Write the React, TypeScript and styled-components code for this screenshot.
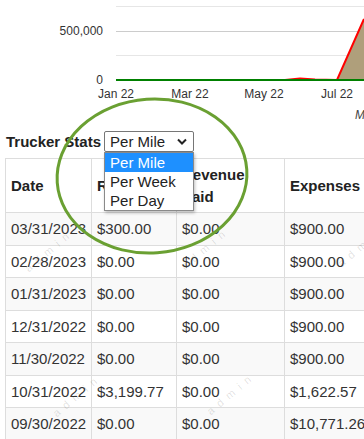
import React from "react"
import styled, { createGlobalStyle } from "styled-components"

const GlobalStyle = createGlobalStyle`
  html, body {
    margin: 0;
    padding: 0;
    background: #fff;
    overflow: hidden;
  }
  body {
    font-family: "Liberation Sans", Arial, sans-serif;
    font-size: 15px;
    color: #333;
  }
`

const Page = styled.div`
  position: relative;
  width: 364px;
  height: 439px;
  overflow: hidden;
  padding: 0 0 0 5px;
  box-sizing: border-box;
`

const ChartSvg = styled.svg`
  display: block;
  margin-left: -5px;
`

const Toolbar = styled.div`
  display: flex;
  align-items: center;
  height: 21px;
  padding-left: 1px;
  gap: 3px;
`

const Label = styled.span`
  font-weight: bold;
  color: #222;
`

const SelectWrap = styled.div`
  position: relative;
  z-index: 3;
`

const SelectBox = styled.div`
  width: 90px;
  height: 21px;
  box-sizing: border-box;
  border: 1px solid #767676;
  border-radius: 2px;
  display: flex;
  align-items: center;
  justify-content: space-between;
  padding: 0 6px 0 5px;
  background: #fff;
  color: #222;
`

const OptionList = styled.div`
  position: absolute;
  left: 0;
  top: 21px;
  width: 90px;
  box-sizing: border-box;
  border: 1px solid #8a8a8a;
  background: #fff;
  box-shadow: 1px 2px 3px rgba(0, 0, 0, 0.25);
`

const Option = styled.div<{ $active?: boolean }>`
  height: 19px;
  line-height: 19px;
  padding-left: 5px;
  background: ${p => (p.$active ? "#1e90ff" : "#fff")};
  color: ${p => (p.$active ? "#fff" : "#222")};
`

const TableWrap = styled.div`
  margin-top: 6px;
  width: 500px;
`

const Table = styled.table`
  border-collapse: collapse;
  table-layout: fixed;
  width: 400px;
`

const Th = styled.th`
  text-align: left;
  vertical-align: middle;
  font-weight: bold;
  color: #222;
  border: 1px solid #ddd;
  padding: 5px 5px;
  line-height: 21.5px;
`

const Row = styled.tr<{ $striped?: boolean }>`
  background: ${p => (p.$striped ? "#f9f9f9" : "#fff")};
`

const Td = styled.td`
  border: 1px solid #ddd;
  padding: 5px 5px;
  line-height: 21.5px;
  white-space: nowrap;
  overflow: hidden;
  color: #333;
`

const Watermark = styled.span`
  position: absolute;
  font-size: 11px;
  letter-spacing: 6px;
  color: rgba(0, 0, 0, 0.13);
  transform: rotate(-40deg);
  transform-origin: left bottom;
  pointer-events: none;
  z-index: 2;
`

const Annotation = styled.svg`
  position: absolute;
  left: 0;
  top: 0;
  pointer-events: none;
  z-index: 5;
`

const rows = [
  ["03/31/2023", "$300.00", "$0.00", "$900.00"],
  ["02/28/2023", "$0.00", "$0.00", "$900.00"],
  ["01/31/2023", "$0.00", "$0.00", "$900.00"],
  ["12/31/2022", "$0.00", "$0.00", "$900.00"],
  ["11/30/2022", "$0.00", "$0.00", "$900.00"],
  ["10/31/2022", "$3,199.77", "$0.00", "$1,622.57"],
  ["09/30/2022", "$0.00", "$0.00", "$10,771.26"],
  ["08/31/2022", "$0.00", "$0.00", "$900.00"],
]

// watermark anchors (left, top) of the repeated "admin" stamp
const stamps = [
  [30, 262],
  [186, 260],
  [343, 257],
  [58, 407],
  [212, 405],
]

const Chart = () => (
  <ChartSvg width={364} height={131} viewBox="0 0 364 131">
    <line x1={116} x2={364} y1={6.5} y2={6.5} stroke="#e6e6e6" />
    <line x1={116} x2={364} y1={31.5} y2={31.5} stroke="#ccc" />
    <line x1={116} x2={364} y1={55.5} y2={55.5} stroke="#e6e6e6" />
    <polygon points="337,80 364,19 364,80" fill="#af9f7b" />
    <polyline
      points="116,80 285,80 300,78.5 315,79.5 337,80 364,19"
      fill="none"
      stroke="#ff0000"
      strokeWidth={2}
    />
    <line x1={116} x2={364} y1={80} y2={80} stroke="#008000" strokeWidth={2} />
    <g fontFamily="Liberation Sans, Arial, sans-serif" fontSize={12} fill="#333">
      <text x={103} y={35} textAnchor="end">500,000</text>
      <text x={103} y={84} textAnchor="end">0</text>
      <text x={116} y={98} textAnchor="middle">Jan 22</text>
      <text x={190} y={98} textAnchor="middle">Mar 22</text>
      <text x={264} y={98} textAnchor="middle">May 22</text>
      <text x={337} y={98} textAnchor="middle">Jul 22</text>
      <text x={355} y={119} fontStyle="italic" fill="#444">Month</text>
    </g>
  </ChartSvg>
)

const Chevron = () => (
  <svg width={10} height={7} viewBox="0 0 10 7">
    <path d="M1 1.5 L5 5.5 L9 1.5" fill="none" stroke="#222" strokeWidth={2} />
  </svg>
)

export default function App() {
  return (
    <>
      <GlobalStyle />
      <Page>
        <Chart />
        <Toolbar>
          <Label>Trucker Stats</Label>
          <SelectWrap>
            <SelectBox>
              <span>Per Mile</span>
              <Chevron />
            </SelectBox>
            <OptionList>
              <Option $active>Per Mile</Option>
              <Option>Per Week</Option>
              <Option>Per Day</Option>
            </OptionList>
          </SelectWrap>
        </Toolbar>
        <TableWrap>
          <Table>
            <colgroup>
              <col style={{ width: 86 }} />
              <col style={{ width: 85 }} />
              <col style={{ width: 108 }} />
              <col style={{ width: 121 }} />
            </colgroup>
            <thead>
              <tr>
                <Th>Date</Th>
                <Th>Revenue</Th>
                <Th>
                  Revenue
                  <br />
                  Paid
                </Th>
                <Th>Expenses</Th>
              </tr>
            </thead>
            <tbody>
              {rows.map((r, i) => (
                <Row key={r[0]} $striped={i % 2 === 0}>
                  {r.map((c, j) => (
                    <Td key={j}>{c}</Td>
                  ))}
                </Row>
              ))}
            </tbody>
          </Table>
        </TableWrap>
        {stamps.map(([x, y]) => (
          <Watermark key={`${x}-${y}`} style={{ left: x, top: y }}>admin</Watermark>
        ))}
        <Annotation width={364} height={439} viewBox="0 0 364 439">
          <ellipse
            cx={152}
            cy={176}
            rx={95}
            ry={77}
            transform="rotate(-4 152 176)"
            fill="none"
            stroke="#6aa032"
            strokeWidth={3}
          />
        </Annotation>
      </Page>
    </>
  )
}
